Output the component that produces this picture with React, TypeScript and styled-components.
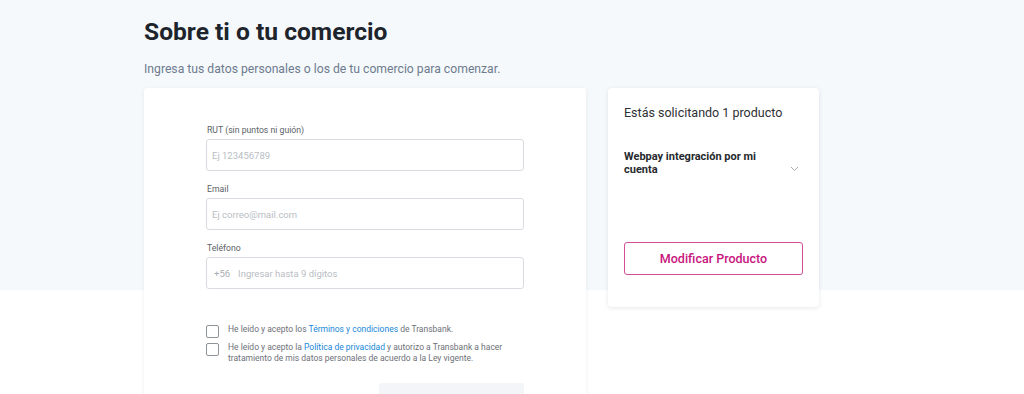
import React from "react";
import styled, { createGlobalStyle } from "styled-components";

const Global = createGlobalStyle`
  html, body { margin: 0; padding: 0; }
  body {
    font-family: Roboto, "Liberation Sans", Arial, sans-serif;
    background: #ffffff;
    -webkit-font-smoothing: antialiased;
  }
  * { box-sizing: border-box; }
`;

const Page = styled.div`
  width: 1024px;
  height: 394px;
  overflow: hidden;
  background: linear-gradient(to bottom, #f5f9fc 0, #f5f9fc 290px, #ffffff 290px);
`;

const Container = styled.div`
  width: 736px;
  margin: 0 auto;
  padding-top: 15px;
`;

const Title = styled.h1`
  margin: 0;
  font-size: 24.6px;
  font-weight: 700;
  color: #1e242c;
  line-height: 34px;
`;

const Subtitle = styled.p`
  margin: 12px 0 0 0;
  font-size: 12.2px;
  line-height: 16px;
  color: #6e7b8e;
`;

const Columns = styled.div`
  display: grid;
  grid-template-columns: 442px 211px;
  column-gap: 22px;
  align-items: start;
  margin-top: 11px;
`;

const FormCard = styled.div`
  background: #ffffff;
  border-radius: 3px;
  box-shadow: 0 1px 4px rgba(30, 50, 80, 0.08);
  padding: 36px 62px 0 62px;
  height: 320px;
  display: flex;
  flex-direction: column;
`;

const Field = styled.div`
  display: flex;
  flex-direction: column;
  margin-bottom: 12px;
`;

const Label = styled.label`
  font-size: 8.7px;
  line-height: 12px;
  color: #5b5f66;
  margin-bottom: 3px;
  padding-left: 1px;
`;

const InputBox = styled.div`
  height: 32px;
  border: 1px solid #d8dce1;
  border-radius: 3px;
  display: flex;
  align-items: center;
  padding: 0 5px;
  gap: 8px;
  background: #fff;
`;

const Prefix = styled.span`
  font-size: 9.5px;
  color: #a9adb3;
  padding-left: 2px;
`;

const Placeholder = styled.span`
  font-size: 9.5px;
  color: #b9bdc3;
`;

const Checks = styled.div`
  margin-top: 23px;
  display: flex;
  flex-direction: column;
  gap: 4px;
`;

const CheckRow = styled.div`
  display: flex;
  align-items: flex-start;
  gap: 9px;
`;

const Box = styled.span`
  flex: none;
  width: 13px;
  height: 13px;
  border: 1px solid #8f949a;
  border-radius: 2px;
  margin-top: 1px;
`;

const CheckText = styled.p`
  margin: 0;
  font-size: 8.5px;
  line-height: 11px;
  color: #6d7178;
`;

const Link = styled.span`
  color: #2088d8;
`;

const SubmitArea = styled.div`
  display: flex;
  justify-content: flex-end;
  margin-top: 19px;
`;

const Submit = styled.div`
  width: 145px;
  height: 34px;
  background: #f3f5f8;
  border-radius: 2px;
`;

const SideCard = styled.div`
  background: #ffffff;
  border-radius: 4px;
  box-shadow: 0 1px 4px rgba(30, 50, 80, 0.12);
  padding: 17px 16px 32px 16px;
  display: flex;
  flex-direction: column;
`;

const SideTitle = styled.div`
  font-size: 12.5px;
  line-height: 16px;
  color: #2e3135;
`;

const Product = styled.div`
  margin-top: 29px;
  display: flex;
  align-items: flex-start;
  justify-content: space-between;
  padding-right: 4px;
`;

const ProductName = styled.div`
  font-size: 11px;
  line-height: 13px;
  font-weight: 700;
  color: #26292d;
  width: 142px;
`;

const ChevronWrap = styled.span`
  display: flex;
  margin-top: 16px;
`;

const ModifyButton = styled.button`
  margin-top: 66px;
  height: 33px;
  width: 100%;
  border: 1px solid #d24f97;
  border-radius: 3px;
  background: #fff;
  color: #c8157e;
  font-family: inherit;
  font-size: 12.5px;
  font-weight: 500;
  cursor: pointer;
`;

const Chevron = () => (
  <svg width="9" height="6" viewBox="0 0 9 6" fill="none">
    <path d="M1 1l3.5 3.5L8 1" stroke="#a6abb1" strokeWidth="1" />
  </svg>
);

export default function App() {
  return (
    <Page>
      <Global />
      <Container>
        <Title>Sobre ti o tu comercio</Title>
        <Subtitle>Ingresa tus datos personales o los de tu comercio para comenzar.</Subtitle>
        <Columns>
          <FormCard>
            <Field>
              <Label>RUT (sin puntos ni guión)</Label>
              <InputBox>
                <Placeholder>Ej 123456789</Placeholder>
              </InputBox>
            </Field>
            <Field>
              <Label>Email</Label>
              <InputBox>
                <Placeholder>Ej correo@mail.com</Placeholder>
              </InputBox>
            </Field>
            <Field>
              <Label>Teléfono</Label>
              <InputBox>
                <Prefix>+56</Prefix>
                <Placeholder>Ingresar hasta 9 dígitos</Placeholder>
              </InputBox>
            </Field>
            <Checks>
              <CheckRow>
                <Box />
                <CheckText>
                  He leído y acepto los <Link>Términos y condiciones</Link> de Transbank.
                </CheckText>
              </CheckRow>
              <CheckRow>
                <Box />
                <CheckText>
                  He leído y acepto la <Link>Política de privacidad</Link> y autorizo a Transbank a hacer
                  <br />
                  tratamiento de mis datos personales de acuerdo a la Ley vigente.
                </CheckText>
              </CheckRow>
            </Checks>
            <SubmitArea>
              <Submit />
            </SubmitArea>
          </FormCard>
          <SideCard>
            <SideTitle>Estás solicitando 1 producto</SideTitle>
            <Product>
              <ProductName>Webpay integración por mi cuenta</ProductName>
              <ChevronWrap>
                <Chevron />
              </ChevronWrap>
            </Product>
            <ModifyButton>Modificar Producto</ModifyButton>
          </SideCard>
        </Columns>
      </Container>
    </Page>
  );
}
